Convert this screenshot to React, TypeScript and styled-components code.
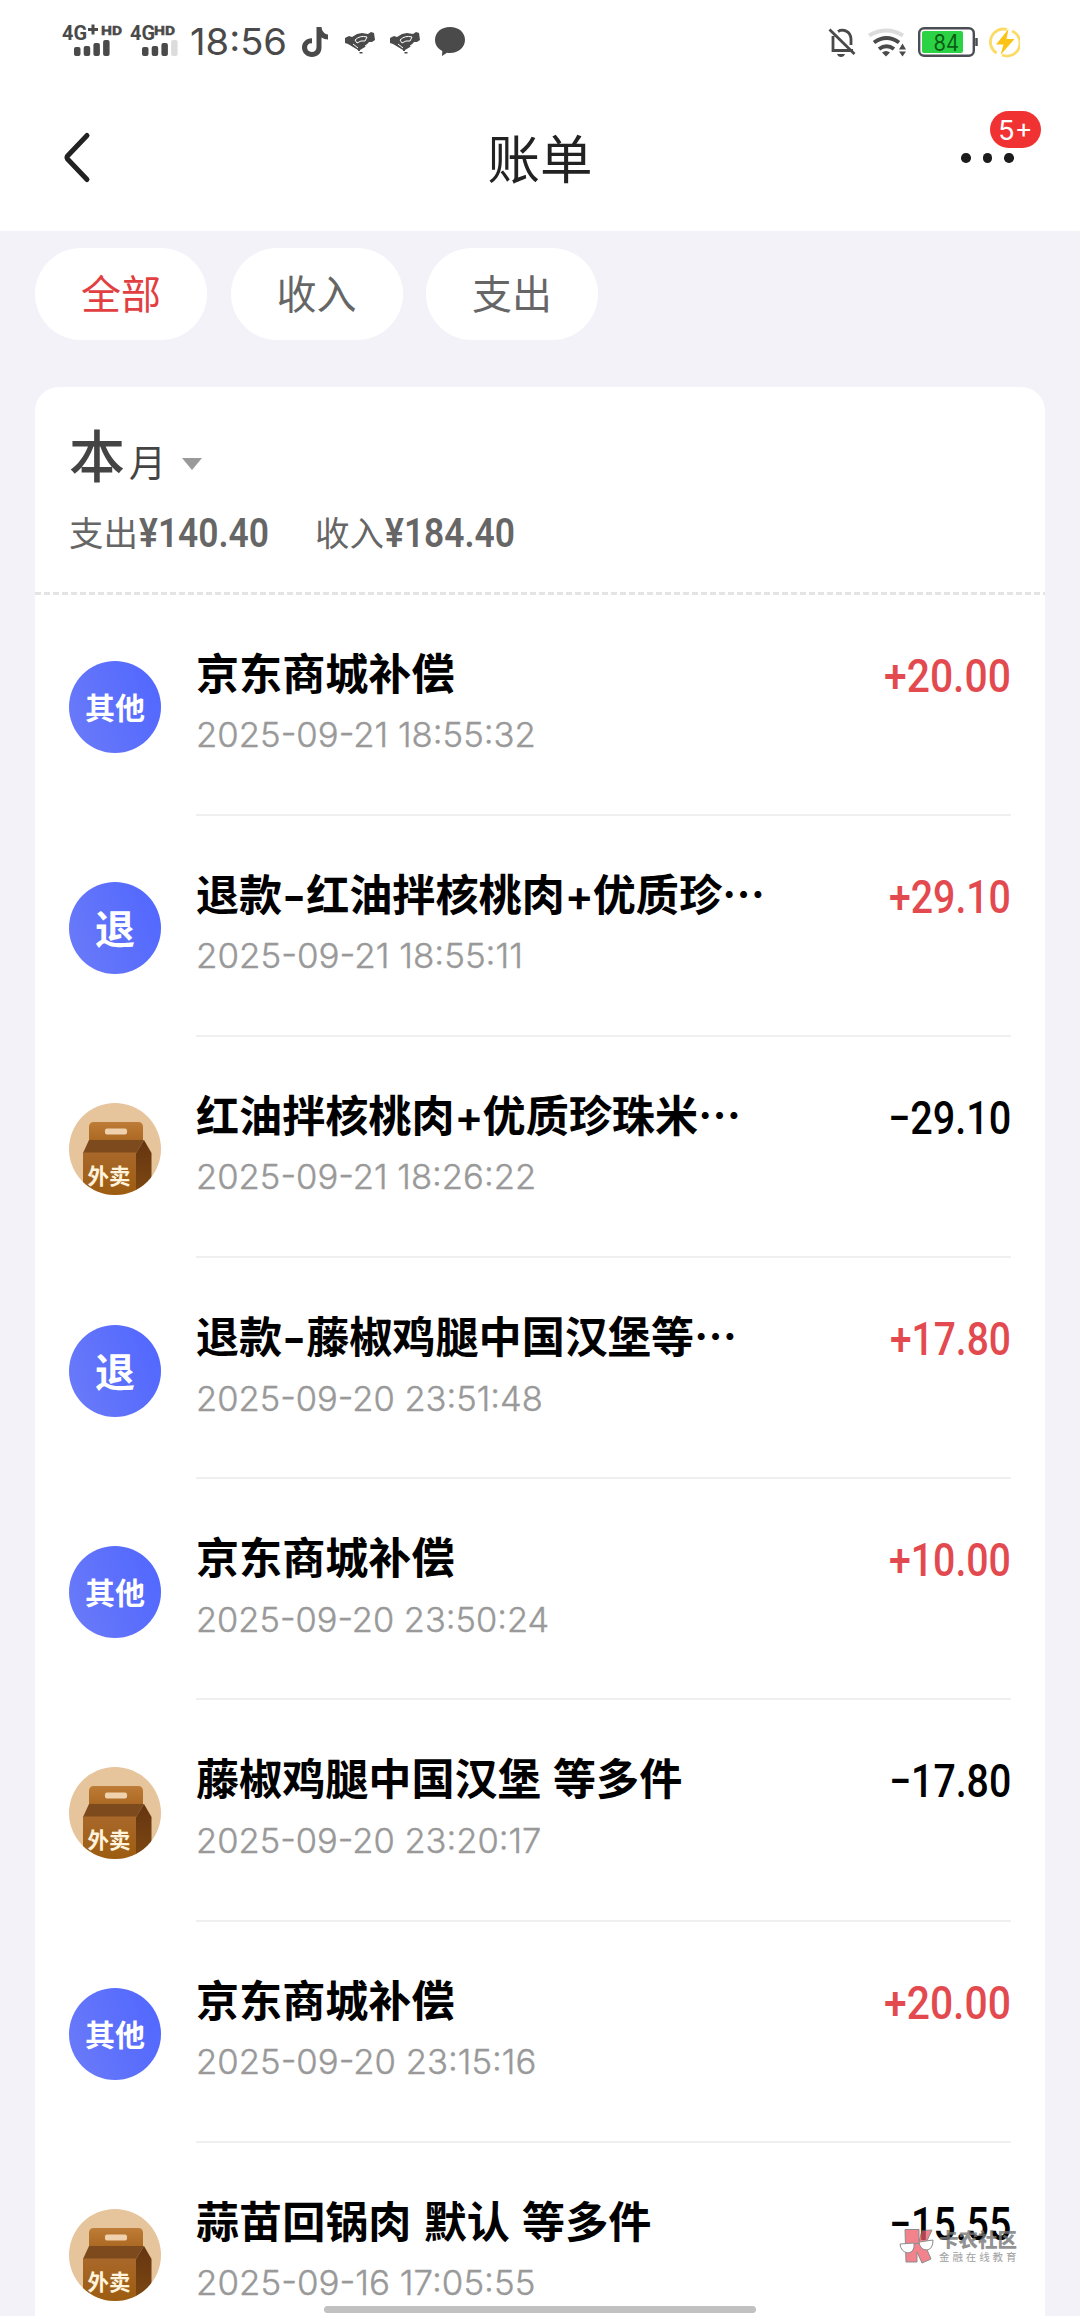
import React, { useLayoutEffect, useRef, useState } from 'react';
import styled, { createGlobalStyle } from 'styled-components';

const CJK = '"Noto Sans CJK SC", sans-serif';

const GlobalStyle = createGlobalStyle`
  * { box-sizing: border-box; }
  html, body { margin: 0; padding: 0; background: #f3f2f8; }
  body { font-family: Inter, ${CJK}; -webkit-font-smoothing: antialiased; }
`;

const Screen = styled.div`
  position: relative;
  width: 1080px;
  height: 2316px;
  overflow: hidden;
  background: #f3f2f8;
`;

/* ---------- text condensed or widened to a set width ---------- */
const FitBox = styled.span<{ $w: number }>`
  display: inline-block;
  width: ${(p) => p.$w}px;
  white-space: pre;
`;
const FitInner = styled.span`
  display: inline-block;
  transform-origin: left center;
`;
function Fit({ w, children }: { w: number; children: React.ReactNode }) {
  const ref = useRef<HTMLSpanElement>(null);
  const [scale, setScale] = useState(1);
  useLayoutEffect(() => {
    if (ref.current && ref.current.offsetWidth) setScale(w / ref.current.offsetWidth);
  }, [w, children]);
  return (
    <FitBox $w={w}>
      <FitInner ref={ref} style={{ transform: `scaleX(${scale})` }}>{children}</FitInner>
    </FitBox>
  );
}

/* ---------- top area ---------- */
const Top = styled.header`
  height: 231px;
  background: #fff;
`;
const StatusBar = styled.div`
  height: 84px;
  display: flex;
  justify-content: space-between;
  padding: 0 60px 0 62px;
`;
const StatusGroup = styled.div`
  display: flex;
  align-items: center;
  height: 84px;
`;
const Clock = styled.div`
  margin-left: 11px;
  margin-right: 15px;
  font: 400 37px/84px Inter, sans-serif;
  color: #4a4a4a;
`;
const NavBar = styled.div`
  height: 147px;
  display: grid;
  grid-template-columns: 200px 1fr 200px;
`;
const BackButton = styled.button`
  display: flex;
  align-items: flex-start;
  border: 0;
  background: none;
  padding: 47px 0 0 61px;
`;
const PageTitle = styled.h1`
  margin: 0;
  text-align: center;
  font: 400 52.5px/145px ${CJK};
  color: #222;
`;
const MoreButton = styled.div`
  position: relative;
  display: flex;
  gap: 12px;
  padding: 69px 0 0 81px;
`;
const Dot = styled.i`
  width: 9.5px;
  height: 9.5px;
  border-radius: 50%;
  background: #1c1c1c;
`;
const Badge = styled.span`
  position: absolute;
  left: 110px;
  top: 27px;
  width: 51px;
  height: 37px;
  border-radius: 19px;
  background: #f13232;
  color: #fff;
  text-align: center;
  font: 400 27px/40px Inter, sans-serif;
`;

/* ---------- filters ---------- */
const Filters = styled.nav`
  display: flex;
  gap: 23.5px;
  padding: 17px 35px 47px;
`;
const Pill = styled.button<{ $active?: boolean }>`
  width: 172px;
  height: 92px;
  border: 0;
  padding: 0 0 4px 0;
  border-radius: 46px;
  background: #fff;
  font: 400 40px/88px ${CJK};
  color: ${(p) => (p.$active ? '#e23f42' : '#666')};
`;

/* ---------- card ---------- */
const Card = styled.main`
  margin: 0 35px;
  height: 1960px;
  background: #fff;
  border-radius: 24px 24px 0 0;
`;
const Summary = styled.section`
  height: 207.5px;
  padding: 24px 34px 0;
  background: repeating-linear-gradient(90deg, #e4e4e4 0 6px, transparent 6px 9px) left bottom / 100% 3px no-repeat;
`;
const Month = styled.div`
  display: flex;
  align-items: baseline;
  height: 90px;
  color: #444;
  font-family: ${CJK};
`;
const MonthBig = styled.span`
  font-size: 56px;
  line-height: 84px;
  font-weight: 500;
`;
const MonthSmall = styled.span`
  font-size: 37px;
  margin: 0 1px 2px 4px;
`;
const Caret = styled.i`
  align-self: center;
  margin: 15px 0 0 15px;
  border: solid transparent;
  border-width: 12px 10.5px 0;
  border-top-color: #999;
`;
const Totals = styled.div`
  display: flex;
  height: 62px;
`;
const Total = styled.div`
  display: flex;
  width: 246px;
  font: 400 34.5px/61px ${CJK};
  color: #666;
`;
const TotalValue = styled.span`
  margin-left: 1px;
  font: 600 40px/66px Roboto, sans-serif;
`;

const Row = styled.article`
  display: flex;
  height: 221.2px;
  padding: 0 34px;
`;
const Avatar = styled.div`
  width: 92px;
  height: 92px;
  margin-top: 66.5px;
  border-radius: 50%;
  overflow: hidden;
  flex: none;
`;
const TextAvatar = styled(Avatar)<{ $big?: boolean }>`
  background: linear-gradient(70deg, #6b7bf8, #5066ff);
  color: #fff;
  text-align: center;
  font-family: ${CJK};
  font-weight: 700;
  font-size: ${(p) => (p.$big ? 40 : 30)}px;
  line-height: 91px;
`;
const Entry = styled.div`
  flex: 1;
  display: flex;
  justify-content: space-between;
  margin-left: 35px;
  border-bottom: 2px solid #efefef;
`;
const Info = styled.div`
  padding-top: 49px;
`;
const Name = styled.div`
  height: 60.5px;
  font: 700 43.1px/61px Inter, ${CJK};
  word-spacing: 2px;
  color: #000;
  white-space: pre;
`;
const Dash = styled.span`
  display: inline-block;
  width: 24px;
  line-height: 0;
  text-align: center;
  transform: scaleX(1.2);
`;
const Plus = styled.span`
  font-weight: 600;
  letter-spacing: -1px;
`;
const Ellipsis = styled.span`
  font-family: ${CJK};
  line-height: 0;
`;
const Time = styled.div`
  height: 60px;
  font: 300 34.5px/62px Inter, sans-serif;
  -webkit-text-stroke: 0.4px #999;
  color: #999;
`;
const Amount = styled.div<{ $in?: boolean }>`
  padding-top: 47px;
  font: 500 46px/68px Roboto, sans-serif;
  color: ${(p) => (p.$in ? '#e34a4f' : '#000')};
`;

/* ---------- overlays ---------- */
const HomeBar = styled.div`
  position: absolute;
  left: 324px;
  top: 2306px;
  width: 432px;
  height: 7px;
  border-radius: 4px;
  background: #c1c1c1;
`;
const Watermark = styled.div`
  position: absolute;
  left: 899px;
  top: 2228px;
  display: flex;
  gap: 4px;
`;
const MarkText = styled.div`
  color: #777;
  opacity: 0.8;
  font-family: ${CJK};
`;
const MarkTitle = styled.div`
  font-size: 19.5px;
  line-height: 22px;
  font-weight: 900;
`;
const MarkSub = styled.div`
  font-size: 10.5px;
  line-height: 14px;
  letter-spacing: 2.9px;
  color: #888;
`;

/* ---------- drawings ---------- */
function Signal({ plus, level }: { plus?: boolean; level: number }) {
  const hd = plus ? 39 : 24;
  const bar = 12;
  return (
    <svg width={plus ? 68 : 49} height="84" fill="#4a4a4a" fontFamily="Roboto, sans-serif" fontWeight="700">
      <text x="0" y="39.5" fontSize="20" textLength="25" lengthAdjust="spacingAndGlyphs">4G</text>
      {plus && <path d="M26 29.5h10M31 24.5v10" stroke="#4a4a4a" strokeWidth="3" />}
      <text x={hd} y="35" fontSize="13" textLength="21" lengthAdjust="spacingAndGlyphs" strokeWidth=".5" stroke="#4a4a4a">HD</text>
      {[9, 10, 13, 16].map((h, i) => (
        <rect key={i} x={bar + i * 9.7} y={56 - h} width="6.5" height={h} rx="2" fill={i < level ? '#4a4a4a' : '#dcdcdc'} />
      ))}
    </svg>
  );
}

const NotifyIcons = () => (
  <svg width="170" height="84" fill="#4a4a4a">
    <path d="M14.500 27h5c.3 4 2.700 7 6.500 7.500v5c-2.500 0-4.600-.7-6.500-2v10c0 6-4.200 9.500-9.500 9.500S0 53 0 47.500 4.500 38 10 38.200v5.200c-2.800-.5-4.900 1.500-4.900 4.100 0 2.500 2 4.400 4.600 4.400 2.800 0 4.800-1.700 4.800-5z" />
    {[43, 88].map((x) => (
      <g key={x} transform={`translate(${x} 32)`}>
        <path d="M0 6l4-2 3 1 5-3 5-1 6 1 3-2 3 1 1 7-3 2-3 0-4 5-5 3v1h-2v-1l-5-3-5-3-3-1z" />
        <path d="M10 8q5-5 12-3l-2 4-4 0-4 2zM8 12l5 4M23 12l-3 2" fill="none" stroke="#fff" strokeWidth="1" />
        <path d="M14.500 20h3v1.500h-3z" />
      </g>
    ))}
    <path d="M148 27c8.500 0 15 5.300 15 12.800S156.500 53 148 53c-1 0-2 0-3-.2L140 56l.3-5c-4.500-2.200-7.300-6.200-7.300-11C133 32.300 139.500 27 148 27z" />
  </svg>
);

const SystemIcons = () => (
  <svg width="196" height="84" fill="none">
    <g stroke="#4a4a4a" strokeWidth="2.8">
      <path d="M9 36v14.500h20M14 31.500c5-3 12.500-.5 13 7.500v6M5.500 29.500l25 24.500" />
    </g>
    <path d="M13.500 31q4-4.500 8 .5zM13 54h8q-1 3-4 3t-4-3z" fill="#4a4a4a" />
    <g strokeWidth="4">
      <path d="M45 35.500q17.500-10 34 0" stroke="#dcdcdc" />
      <path d="M50 42.500q12.500-9 25 0" stroke="#4a4a4a" />
      <path d="M55 49q7.500-5.500 15 0" stroke="#4a4a4a" />
    </g>
    <path d="M58 52.500q4-3 8 0l-4 4zM78.500 43.500l3.500 6h-7zM78.500 56.500l3.500-5h-7z" fill="#4a4a4a" />
    <rect x="95.2" y="28.2" width="54.6" height="27.6" rx="5" stroke="#4a4d52" strokeWidth="2.4" />
    <rect x="98" y="31" width="41" height="22" rx="2" fill="#2bd344" />
    <path d="M152.500 38v8" stroke="#4a4d52" strokeWidth="2.5" />
    <text x="109.5" y="50.5" fontFamily="Inter, sans-serif" fontSize="22.5" fill="#0c5c14" textLength="25.5" lengthAdjust="spacingAndGlyphs">84</text>
    <g transform="translate(166 28)">
      <path d="M6.500 25A13 13 0 0 1 17 1.500M22 3A13 13 0 0 1 12 27" stroke="#fadb66" strokeWidth="2.8" />
      <path d="M18.500 1L6 16.500H13.500L10.500 27 24.500 11h-8z" fill="#fbc316" />
    </g>
  </svg>
);

const TakeawayIcon = () => (
  <svg width="92" height="92" viewBox="0 0 92 92">
    <defs>
      <linearGradient id="bagFront" x1="0" y1="0" x2="0" y2="1">
        <stop offset="0" stopColor="#a9682a" />
        <stop offset="1" stopColor="#9c5c10" />
      </linearGradient>
      <linearGradient id="bagTop" x1="0" y1="0" x2="0" y2="1">
        <stop offset="0" stopColor="#bd7c37" />
        <stop offset="1" stopColor="#ab6822" />
      </linearGradient>
      <linearGradient id="bagSide" x1="0" y1="0" x2="0" y2="1">
        <stop offset="0" stopColor="#653510" />
        <stop offset="1" stopColor="#7d4812" />
      </linearGradient>
    </defs>
    <rect width="92" height="92" fill="#e6c49c" />
    <path d="M20 38V24q0-5 5-5h44q5 0 5 5v14z" fill="url(#bagTop)" />
    <rect x="36" y="25.5" width="22" height="6" rx="2" fill="#efd2ad" />
    <path d="M20 37h55l-8 13H14z" fill="#7c4a1c" />
    <path d="M75 37l7.500 13v42H67V50z" fill="url(#bagSide)" />
    <path d="M14 49.500h53V92H14z" fill="url(#bagFront)" />
    <text x="18.5" y="81" fontFamily={CJK} fontSize="21.5" fontWeight="700" fill="#fff3dc">外卖</text>
  </svg>
);

const MarkLogo = () => (
  <svg width="36" height="36" viewBox="0 0 36 36" opacity=".75">
    <path d="M6 1.500h14v12l3-11 10-.5-7 15 6 14-9 4-5-11v10H7z" fill="#ee5a66" stroke="#666" strokeWidth="1" />
    <path d="M1 16l14-1q1 9-6 10-7-1-8-9zM20 14l14-2q0 9-6 10-7 0-8-8zM15 16l5-1" fill="#fff" stroke="#666" strokeWidth="1" />
  </svg>
);

/* ---------- data ---------- */
type Bill = {
  kind: 'other' | 'refund' | 'takeaway';
  name: React.ReactNode;
  time: string;
  timeW: number;
  amount: string;
  amountW: number;
};
const dots = <Ellipsis>…</Ellipsis>;
const bills: Bill[] = [
  { kind: 'other', name: '京东商城补偿', time: '2025-09-21 18:55:32', timeW: 340, amount: '+20.00', amountW: 127 },
  { kind: 'refund', name: <>退款<Dash>-</Dash>红油拌核桃肉<Plus>+</Plus>优质珍{dots}</>, time: '2025-09-21 18:55:11', timeW: 327, amount: '+29.10', amountW: 122 },
  { kind: 'takeaway', name: <>红油拌核桃肉<Plus>+</Plus>优质珍珠米{dots}</>, time: '2025-09-21 18:26:22', timeW: 340, amount: '−29.10', amountW: 123 },
  { kind: 'refund', name: <>退款<Dash>-</Dash>藤椒鸡腿中国汉堡等{dots}</>, time: '2025-09-20 23:51:48', timeW: 347, amount: '+17.80', amountW: 121 },
  { kind: 'other', name: '京东商城补偿', time: '2025-09-20 23:50:24', timeW: 353, amount: '+10.00', amountW: 122 },
  { kind: 'takeaway', name: '藤椒鸡腿中国汉堡 等多件', time: '2025-09-20 23:20:17', timeW: 345, amount: '−17.80', amountW: 122 },
  { kind: 'other', name: '京东商城补偿', time: '2025-09-20 23:15:16', timeW: 340, amount: '+20.00', amountW: 127 },
  { kind: 'takeaway', name: '蒜苗回锅肉 默认 等多件', time: '2025-09-16 17:05:55', timeW: 339, amount: '−15.55', amountW: 122 },
];

function BillRow({ bill }: { bill: Bill }) {
  return (
    <Row>
      {bill.kind === 'takeaway' ? (
        <Avatar><TakeawayIcon /></Avatar>
      ) : (
        <TextAvatar $big={bill.kind === 'refund'}>{bill.kind === 'refund' ? '退' : '其他'}</TextAvatar>
      )}
      <Entry>
        <Info>
          <Name>{bill.name}</Name>
          <Time><Fit w={bill.timeW}>{bill.time}</Fit></Time>
        </Info>
        <Amount $in={bill.amount[0] === '+'}><Fit w={bill.amountW}>{bill.amount}</Fit></Amount>
      </Entry>
    </Row>
  );
}

export default function App() {
  return (
    <Screen>
      <GlobalStyle />
      <Top>
        <StatusBar>
          <StatusGroup>
            <Signal plus level={4} />
            <Signal level={3} />
            <Clock><Fit w={97}>18:56</Fit></Clock>
            <NotifyIcons />
          </StatusGroup>
          <StatusGroup><SystemIcons /></StatusGroup>
        </StatusBar>
        <NavBar>
          <BackButton>
            <svg width="32" height="54" fill="none" stroke="#222" strokeWidth="5" strokeLinecap="round" strokeLinejoin="round">
              <path d="M26 4.500L6.500 25Q5.500 26.500 6.500 28L26 48.500" />
            </svg>
          </BackButton>
          <PageTitle>账单</PageTitle>
          <MoreButton>
            <Dot /><Dot /><Dot />
            <Badge>5+</Badge>
          </MoreButton>
        </NavBar>
      </Top>
      <Filters>
        <Pill $active>全部</Pill>
        <Pill>收入</Pill>
        <Pill>支出</Pill>
      </Filters>
      <Card>
        <Summary>
          <Month>
            <MonthBig>本</MonthBig>
            <MonthSmall>月</MonthSmall>
            <Caret />
          </Month>
          <Totals>
            <Total>支出<TotalValue><Fit w={130}>¥140.40</Fit></TotalValue></Total>
            <Total>收入<TotalValue><Fit w={130}>¥184.40</Fit></TotalValue></Total>
          </Totals>
        </Summary>
        {bills.map((b, i) => <BillRow key={i} bill={b} />)}
      </Card>
      <Watermark>
        <MarkLogo />
        <MarkText>
          <MarkTitle>卡农社区</MarkTitle>
          <MarkSub>金融在线教育</MarkSub>
        </MarkText>
      </Watermark>
      <HomeBar />
    </Screen>
  );
}
